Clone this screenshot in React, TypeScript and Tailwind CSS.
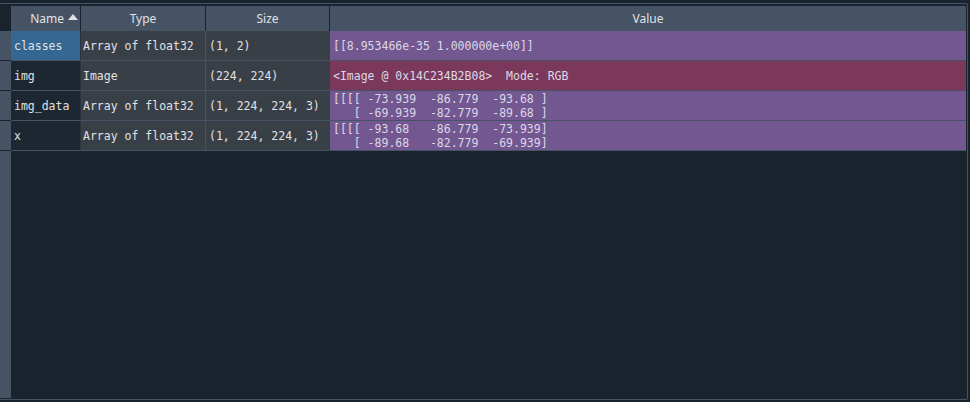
const MONO = "font-['DejaVu_Sans_Mono','Liberation_Mono',monospace] text-[11.5px] leading-[14px]";

type Row = {
  name: string;
  type: string;
  size: string;
  value: string;
  kind: 'array' | 'image';
  selected?: boolean;
};

const rows: Row[] = [
  { name: 'classes', type: 'Array of float32', size: '(1, 2)', value: '[[8.953466e-35 1.000000e+00]]', kind: 'array', selected: true },
  { name: 'img', type: 'Image', size: '(224, 224)', value: '<Image @ 0x14C234B2B08>  Mode: RGB', kind: 'image' },
  {
    name: 'img_data',
    type: 'Array of float32',
    size: '(1, 224, 224, 3)',
    value: '[[[[ -73.939  -86.779  -93.68 ]\n   [ -69.939  -82.779  -89.68 ]',
    kind: 'array',
  },
  {
    name: 'x',
    type: 'Array of float32',
    size: '(1, 224, 224, 3)',
    value: '[[[[ -93.68   -86.779  -73.939]\n   [ -89.68   -82.779  -69.939]',
    kind: 'array',
  },
];

function SortArrow() {
  return (
    <svg width="10" height="6" viewBox="0 0 10 6" className="ml-[4px] mb-[3px]">
      <path d="M0 6 L5 0 L10 6 Z" fill="#e0e1e3" />
    </svg>
  );
}

export default function App() {
  return (
    <div className="w-[970px] h-[402px] bg-[#19232d] overflow-hidden pt-[3px] pr-[2px] pb-[2px]">
      <div className="h-full border-t border-r border-b border-[#455364] rounded-tr-[3px] rounded-br-[2px] pt-[2px] pr-[1px] pb-[1px] flex flex-col">
        {/* header */}
        <div className="flex h-[25px] font-['Noto_Sans','Open_Sans',sans-serif] text-[12px] text-[#e0e1e3]">
          <div className="w-[11px] shrink-0" />
          <div className="w-[70px] shrink-0 bg-[#455364] border-r border-[#19232d] flex items-center justify-end pr-[2px]">
            <span>Name</span>
            <SortArrow />
          </div>
          <div className="w-[125px] shrink-0 bg-[#455364] border-r border-[#19232d] flex items-center justify-center">Type</div>
          <div className="w-[124px] shrink-0 bg-[#455364] border-r border-[#19232d] flex items-center justify-center">Size</div>
          <div className="flex-1 bg-[#455364] flex items-center justify-center">Value</div>
        </div>

        {/* body */}
        <div className="flex-1 flex">
          <div className="w-[11px] shrink-0 flex flex-col">
            {rows.map((r) => (
              <div key={r.name} className="h-[30px] bg-[#455364] border-b border-[#19232d]" />
            ))}
            <div className="flex-1 bg-[#455364]" />
          </div>
          <div className="flex-1 flex flex-col">
            {rows.map((r) => (
              <div key={r.name} className={`flex h-[30px] border-b border-[#455364] text-[#e0e1e3] ${MONO}`}>
                <div
                  className={`w-[70px] shrink-0 border-r border-[#2b343e] flex items-center pl-[3px] ${
                    r.selected ? 'bg-[#346792]' : 'bg-[#1d2731]'
                  }`}
                >
                  {r.name}
                </div>
                <div className="w-[125px] shrink-0 bg-[#383f47] border-r border-[#455364] flex items-center pl-[2px]">
                  {r.type}
                </div>
                <div className="w-[124px] shrink-0 bg-[#383f47] flex items-center pl-[3px]">{r.size}</div>
                <div
                  className={`flex-1 whitespace-pre pl-[3px] text-[#ddd8e6] ${
                    r.kind === 'image' ? 'bg-[#7b385b]' : 'bg-[#725791]'
                  } ${r.value.includes('\n') ? 'pt-[1px]' : 'flex items-center'}`}
                >
                  {r.value}
                </div>
              </div>
            ))}
          </div>
        </div>
      </div>
    </div>
  );
}
